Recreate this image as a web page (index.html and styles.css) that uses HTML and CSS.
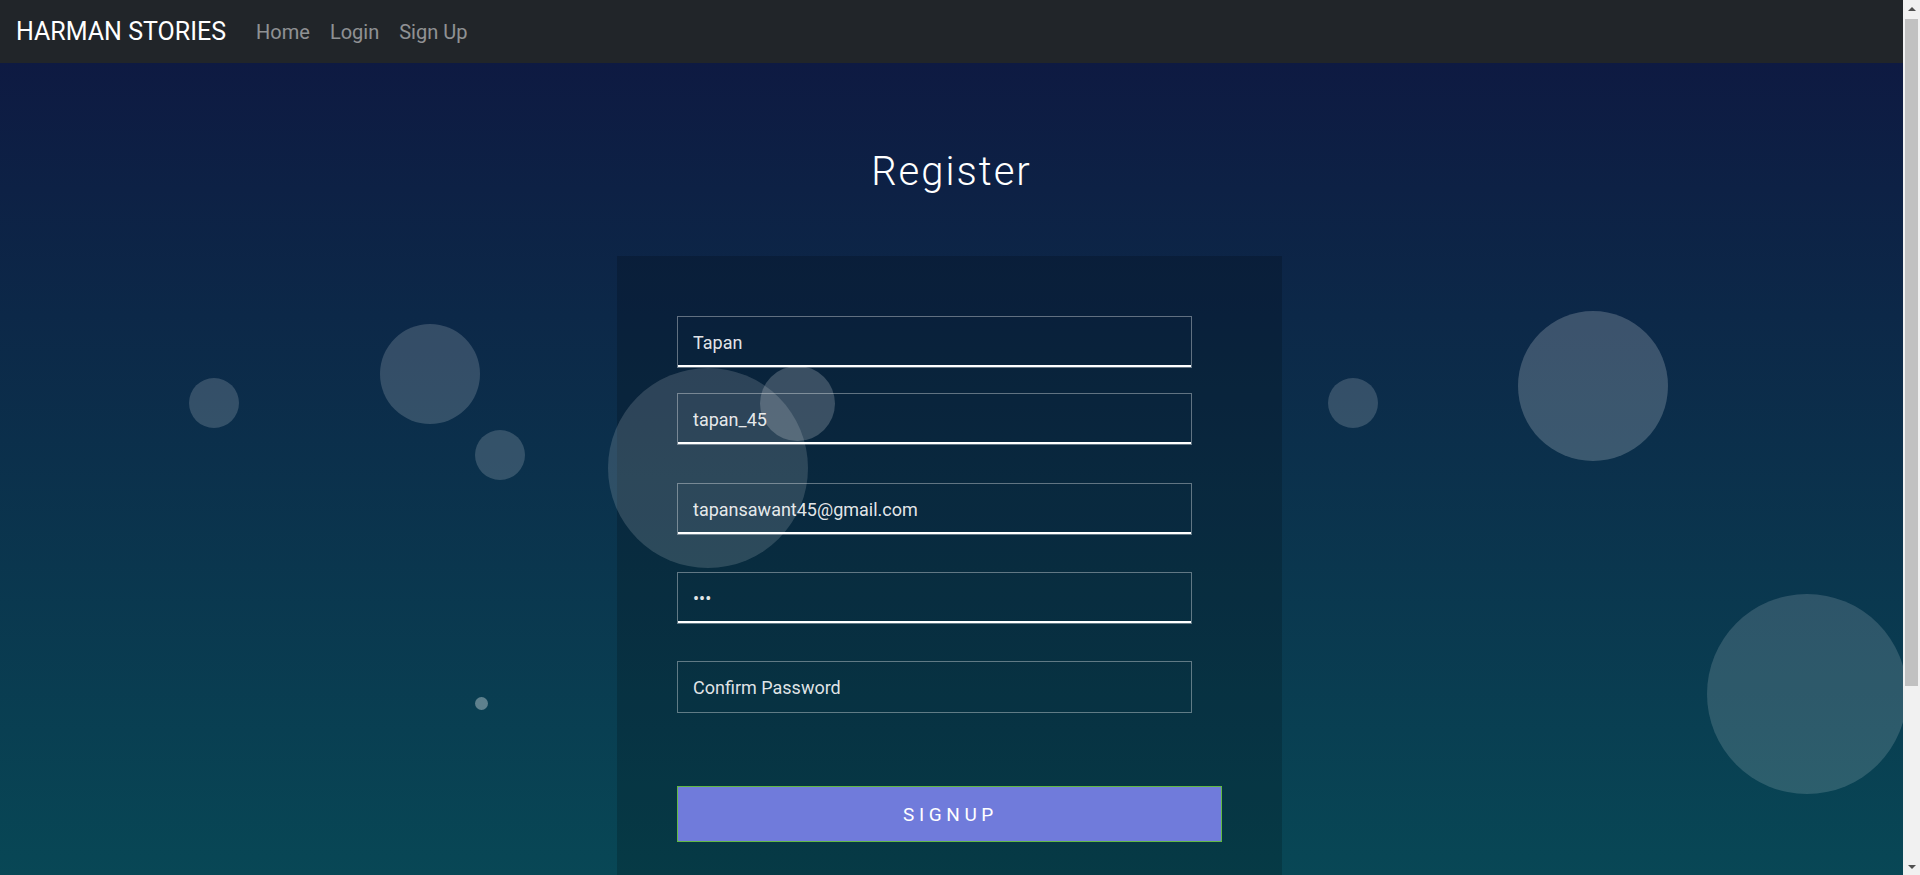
FILE: index.html
```html
<!DOCTYPE html>
<html lang="en">
<head>
<meta charset="utf-8">
<title>Register - Harman Stories</title>
<link rel="stylesheet" href="styles.css">
</head>
<body>
  <div class="viewport">
    <nav class="navbar">
      <a class="brand" href="#">HARMAN STORIES</a>
      <ul class="nav-links">
        <li><a class="nav-link" href="#">Home</a></li>
        <li><a class="nav-link" href="#">Login</a></li>
        <li><a class="nav-link" href="#">Sign Up</a></li>
      </ul>
    </nav>

    <main class="page">
      <h1 class="title">Register</h1>

      <section class="card">
        <form class="form">
          <input class="field field-valid" type="text" value="Tapan" placeholder="Name">
          <input class="field field-valid field-second" type="text" value="tapan_45" placeholder="Username">
          <input class="field field-valid field-spaced" type="email" value="tapansawant45@gmail.com" placeholder="Email">
          <input class="field field-valid field-spaced" type="password" value="abc" placeholder="Password">
          <input class="field field-spaced" type="password" placeholder="Confirm Password">
          <button class="btn-signup" type="button">SIGNUP</button>
        </form>
      </section>

      <div class="bubbles" aria-hidden="true">
        <span class="bubble b1"></span>
        <span class="bubble b2"></span>
        <span class="bubble b3"></span>
        <span class="bubble b4"></span>
        <span class="bubble b5"></span>
        <span class="bubble b6"></span>
        <span class="bubble b7"></span>
        <span class="bubble b8"></span>
        <span class="bubble b9"></span>
      </div>
    </main>
  </div>

  <div class="scrollbar" aria-hidden="true">
    <span class="sb-arrow sb-up"></span>
    <span class="sb-track"><span class="sb-thumb"></span></span>
    <span class="sb-arrow sb-down"></span>
  </div>
</body>
</html>
```

FILE: styles.css
```css
* {
  box-sizing: border-box;
}

html, body {
  margin: 0;
  padding: 0;
}

body {
  font-family: Roboto, "Liberation Sans", Arial, sans-serif;
  background: #06545b;
}

.viewport {
  margin-right: 17px;
}

/* ---------- Browser scrollbar ---------- */
.scrollbar {
  position: fixed;
  top: 0;
  right: 0;
  width: 17px;
  height: 100vh;
  background: #f1f1f1;
  display: flex;
  flex-direction: column;
  z-index: 10;
}

.sb-arrow {
  flex: 0 0 17px;
  display: flex;
  align-items: center;
  justify-content: center;
}

.sb-arrow::before {
  content: "";
  width: 0;
  height: 0;
  border-left: 4px solid transparent;
  border-right: 4px solid transparent;
}

.sb-up::before {
  border-bottom: 4px solid #505050;
}

.sb-down::before {
  border-top: 4px solid #505050;
}

.sb-track {
  flex: 1;
  padding: 2px 2px 0;
}

.sb-thumb {
  display: block;
  height: 667px;
  background: #c1c1c1;
}

/* ---------- Navbar ---------- */
.navbar {
  height: 63px;
  background: #212529;
  display: flex;
  align-items: center;
  padding: 0 16px;
}

.brand {
  font-size: 25px;
  line-height: 1.5;
  color: #fff;
  text-decoration: none;
  margin-right: 20px;
}

.nav-links {
  display: flex;
  list-style: none;
  margin: 0;
  padding: 0;
}

.nav-link {
  display: block;
  font-size: 20px;
  line-height: 30px;
  padding: 0 10px;
  color: rgba(255, 255, 255, 0.5);
  text-decoration: none;
}

/* ---------- Page ---------- */
.page {
  position: relative;
  overflow: hidden;
  min-height: 1044px;
  padding: 85px 0 165px;
  background: linear-gradient(to bottom, #0e1a42 0%, #06545b 100%);
}

.title {
  margin: 0 0 60px;
  text-align: center;
  font-size: 40px;
  line-height: 48px;
  font-weight: 300;
  letter-spacing: 2px;
  color: #fff;
}

.card {
  width: 665px;
  margin: 0 auto;
  padding: 60px 60px 100px;
  background: rgba(0, 0, 0, 0.18);
  position: relative;
  left: -2px;
}

.form {
  display: flex;
  flex-direction: column;
  align-items: flex-start;
}

.field {
  width: 515px;
  height: 52px;
  padding: 0 15px;
  border: 1px solid rgba(255, 255, 255, 0.36);
  border-radius: 0;
  background: transparent;
  color: rgba(255, 255, 255, 0.9);
  font-family: Roboto, "Liberation Sans", Arial, sans-serif;
  font-size: 18px;
  outline: none;
}

.field::placeholder {
  color: rgba(255, 255, 255, 0.88);
  opacity: 1;
}

.field-valid {
  box-shadow: inset 0 -2px 0 #fff;
}

.field-second {
  margin-top: 25px;
}

.field-spaced {
  margin-top: 37px;
}

.field-second + .field-spaced {
  margin-top: 38px;
}

.btn-signup {
  width: 545px;
  height: 56px;
  margin-top: 73px;
  border: 1px solid #62b844;
  background: #707bdb;
  color: #fff;
  font-family: Roboto, "Liberation Sans", Arial, sans-serif;
  font-size: 19px;
  font-weight: 400;
  letter-spacing: 4.6px;
  text-indent: 2px;
  cursor: pointer;
}

/* ---------- Decorative bubbles ---------- */
.bubbles {
  position: absolute;
  inset: 0;
  pointer-events: none;
}

.bubble {
  position: absolute;
  border-radius: 50%;
  background: rgba(255, 255, 255, 0.17);
}

/* positions are relative to the page area (which starts 63px down) */
.b1 { left: 189px;  top: 315px; width: 50px;  height: 50px; }
.b2 { left: 380px;  top: 261px; width: 100px; height: 100px; }
.b3 { left: 475px;  top: 367px; width: 50px;  height: 50px; }
.b4 { left: 475px;  top: 634px; width: 13px;  height: 13px; background: rgba(255, 255, 255, 0.35); }
.b5 { left: 608px;  top: 305px; width: 200px; height: 200px; background: rgba(255, 255, 255, 0.15); }
.b6 { left: 760px;  top: 303px; width: 75px;  height: 75px;  background: rgba(255, 255, 255, 0.2); }
.b7 { left: 1328px; top: 315px; width: 50px;  height: 50px; }
.b8 { left: 1518px; top: 248px; width: 150px; height: 150px; background: rgba(255, 255, 255, 0.2); }
.b9 { left: 1707px; top: 531px; width: 200px; height: 200px; background: rgba(255, 255, 255, 0.15); }
```
